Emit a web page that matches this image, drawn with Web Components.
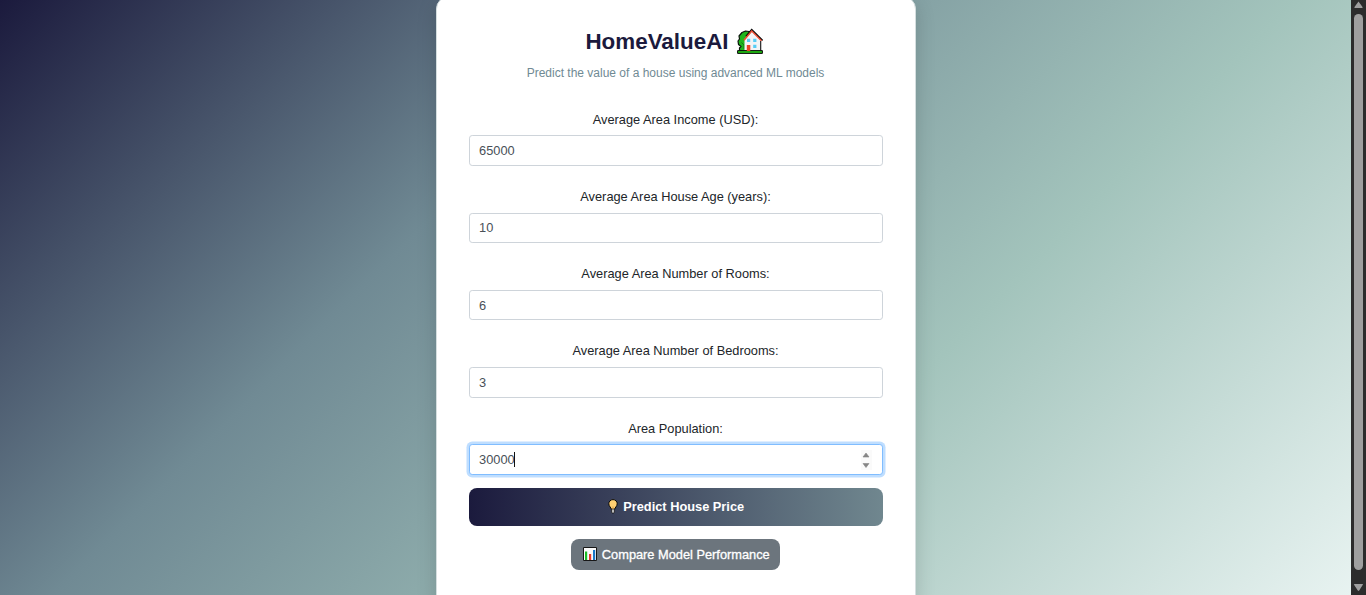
<!DOCTYPE html>
<html lang="en"><head><meta charset="utf-8"><title>HomeValueAI</title>
<style>html,body{margin:0;height:100%;overflow:hidden;font-family:"Liberation Sans",Arial,sans-serif}</style></head>
<body><home-page></home-page>
<script>
const define=(name,html)=>customElements.define(name,class extends HTMLElement{
  constructor(){super();const t=document.createElement('template');t.innerHTML=html;
    this.attachShadow({mode:'open'}).append(t.content.cloneNode(true));}
});
define('house-icon',`<style>:host{display:block;width:26px;height:26px}svg{display:block}</style>
<svg width="26" height="26" viewBox="0 0 26 26"><path d="M2.5 23v-3L4 18.5 1.5 16.5 1 13l1.5-2L2 8l3-3.5L8.5 3l3.5.5L14 5v18z" fill="#1fb51c" stroke="#0a120a" stroke-width="1.2" stroke-linejoin="round"/><path d="M4.5 14.5 7 17v4" fill="none" stroke="#12800f"/><path d="M7.5 11 14.5 4 23.3 12v11H7.5z" fill="#f4f4f6"/><path d="M9 8.3 14.7 1.5 25.6 12.4" fill="none" stroke="#0a0a0a" stroke-width="1.4"/><path d="M7 12.2 14.7 3 24.5 12.8" fill="none" stroke="#ed4b30" stroke-width="1.5"/><path d="M23.7 13v9.5" stroke="#111" stroke-width="1.1"/><path d="M.6 25.4v-2.8h24.8v2.8z" fill="#20ba13" stroke="#080808"/><path d="M9.8 17h3.5v6H9.8z" fill="#e94425"/><path d="M10 10.7h3.2V14H10zm6.2 0h3.2V14h-3.2zm0 6h3.2V20h-3.2z" fill="#58cdf5"/></svg>`);
define('bulb-icon',`<style>:host{display:block;width:10px;height:15px}svg{display:block}</style>
<svg width="10" height="15" viewBox="0 0 10 15"><path d="M3.3 10.3C3.3 8.6.8 7.4.8 4.8a4.2 4.2 0 0 1 8.4 0c0 2.6-2.5 3.8-2.5 5.5z" fill="#ffd072" stroke="#080808"/><path d="M3.5 10h3v3.2l-.7.9H4.2l-.7-.9z" fill="#bbb" stroke="#111" stroke-width=".7"/><path d="M5 7.5V10" stroke="#d79c45"/></svg>`);
define('chart-icon',`<style>:host{display:block;width:14px;height:14px}svg{display:block}</style>
<svg width="14" height="14" viewBox="0 0 14 14"><path d="M.5.5h13v13H.5z" fill="#fafafa" stroke="#171717"/><path d="M2 4.5h2.2V13H2z" fill="#19bd24"/><path d="M6 7h2.2v6H6z" fill="#ea3829"/><path d="M10 3h2.2v10H10z" fill="#1876c8"/></svg>`);
customElements.define('number-field',class extends HTMLElement{
  constructor(){super();this.attachShadow({mode:'open'}).innerHTML=`<style>
:host{display:block;height:77.2px;color:#212529;font-size:12.8px;line-height:19.2px}
.label{height:25.6px;text-align:center}.box{box-sizing:border-box;height:30.6px;border:1px solid #ced4da;border-radius:3.2px;padding:0 9px 0 9.6px;display:flex;align-items:center;color:#495057;background:#fff}
.caret,.spin{display:none}:host([focused]) .box{border-color:#80bdff;box-shadow:0 0 0 2.5px #bfdeff}
:host([focused]) .caret{display:block;width:1px;height:15px;margin-left:-.6px;background:#111}:host([focused]) .spin{display:block;margin-left:auto}</style>
<div class="label"><slot></slot></div><div class="box"><span>${this.getAttribute('value')}</span><i class="caret"></i><svg class="spin" width="14" height="20"><path d="M2 0h11v20H2z" fill="#fafafa"/><path d="M4 7 7 3 10 7zM4 13.5l3 4 3-4z" fill="#858585" stroke="#858585" stroke-width=".6" stroke-linejoin="round"/></svg></div>`;}
});
define('action-button',`<style>:host{display:flex;align-items:center;justify-content:center;color:#fff;font-weight:bold;font-size:12.8px;line-height:19px;border-radius:8px;box-sizing:border-box}
:host([kind=primary]){height:38px;background:linear-gradient(90deg,#1b1a3d,#70878f);gap:5px;padding-left:1.4px}
:host([kind=secondary]){height:31px;width:209px;align-self:center;margin-top:13px;background:#6c757d;gap:5px;padding-left:1.6px;font-weight:normal;-webkit-text-stroke:.3px #fff}</style><slot name="icon"></slot><span><slot></slot></span>`);
define('value-card',`<style>:host{display:flex;flex-direction:column;box-sizing:border-box;width:480px;height:612px;margin-top:-4px;padding:31px 32px;border:1px solid #d5dedf;border-radius:13px;background:#fff;box-shadow:0 6px 20px #00000026}
.title{height:26px;display:flex;align-items:center;justify-content:center;gap:8px;padding-right:3px;color:#1b1a3d;font-size:22.4px;font-weight:bold}
.title span{padding-top:1px}
.sub{margin:10px 0 27.9px;text-align:center;font-size:12px;line-height:18px;color:#708a94}</style>
<div class="title"><span>HomeValueAI</span><house-icon></house-icon></div><div class="sub">Predict the value of a house using advanced ML models</div><slot></slot>`);
define('scroll-rail',`<style>:host{display:block;width:15px;height:595px;background:#2c2c2c}svg{display:block}</style><svg width="15" height="595"><path d="M7.5 1.5 11.5 7Q12 8 11 8H4Q3 8 3.5 7zM3.5 584h8q.8 0 .3.8L8.2 590.5q-.7.8-1.4 0L3 584.8q-.4-.8.5-.8z" fill="#9f9f9f"/><rect x="3" y="14" width="9" height="556" rx="4.5" fill="#9f9f9f"/></svg>`);
define('home-page',`<style>:host{display:flex;height:595px;width:1366px;overflow:hidden}
main{width:1351px;height:595px;display:flex;justify-content:center;align-items:flex-start;background:linear-gradient(135deg,#1b1a3d,#708a94,#a3c4bc,#e8f3f1)}</style>
<main><value-card><number-field value="65000">Average Area Income (USD):</number-field><number-field value="10">Average Area House Age (years):</number-field><number-field value="6">Average Area Number of Rooms:</number-field><number-field value="3">Average Area Number of Bedrooms:</number-field><number-field value="30000" focused>Area Population:</number-field>
<action-button kind="primary" style="margin-top:-7.9px"><bulb-icon slot="icon"></bulb-icon>Predict House Price</action-button><action-button kind="secondary"><chart-icon slot="icon"></chart-icon>Compare Model Performance</action-button></value-card></main><scroll-rail></scroll-rail>`);
</script></body></html>
